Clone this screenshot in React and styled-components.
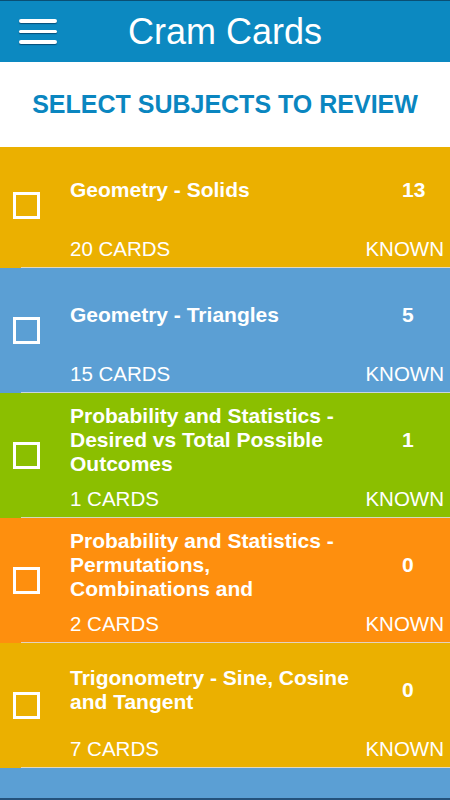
import React from 'react';
import styled, { createGlobalStyle } from 'styled-components';

const GlobalStyle = createGlobalStyle`
  html, body {
    margin: 0;
    padding: 0;
    background: #ffffff;
  }
  body {
    font-family: 'Liberation Sans', Arial, Helvetica, sans-serif;
    -webkit-font-smoothing: antialiased;
  }
`;

const Screen = styled.div`
  width: 450px;
  height: 800px;
  display: flex;
  flex-direction: column;
  overflow: hidden;
  border-bottom: 2px solid #24527c;
  box-sizing: border-box;
`;

const Header = styled.header`
  height: 62px;
  flex-shrink: 0;
  box-sizing: border-box;
  border-top: 1px solid #0a4f74;
  background: #0c89c1;
  display: grid;
  grid-template-columns: 1fr auto 1fr;
  align-items: center;
`;

const MenuButton = styled.div`
  display: flex;
  flex-direction: column;
  gap: 7px;
  padding-left: 19px;
`;

const MenuBar = styled.span`
  display: block;
  width: 38px;
  height: 3.5px;
  border-radius: 2px;
  background: #ffffff;
  box-shadow: 0 1px 1px rgba(0, 30, 60, 0.55);
`;

const Title = styled.h1`
  margin: 0;
  color: #ffffff;
  font-size: 36px;
  font-weight: 400;
  line-height: 1;
  white-space: nowrap;
`;

const SelectSection = styled.div`
  position: relative;
  z-index: 1;
  height: 85px;
  flex-shrink: 0;
  background: #ffffff;
  display: flex;
  align-items: center;
  justify-content: center;
`;

const SelectTitle = styled.h2`
  margin: 0;
  color: #0a86c0;
  font-size: 25px;
  font-weight: 700;
  white-space: nowrap;
`;

const SubjectList = styled.ul`
  list-style: none;
  margin: -4px 0 0;
  padding: 0;
  flex: 1;
  background: #5b9fd4;
`;

const Row = styled.li`
  position: relative;
  display: flex;
  height: 125px;
  box-sizing: border-box;
  padding-bottom: 1px;
  background: ${props => props.$color};
  color: #ffffff;

  &::after {
    content: '';
    position: absolute;
    left: 21px;
    right: 0;
    bottom: 0;
    height: 1px;
    background: rgba(222, 222, 222, 0.85);
  }
`;

const CheckCol = styled.div`
  width: 70px;
  flex-shrink: 0;
  box-sizing: border-box;
  padding-left: 13px;
  display: flex;
  align-items: center;
`;

const Checkbox = styled.span`
  display: block;
  width: 27px;
  height: 27px;
  box-sizing: border-box;
  border: 3px solid #ffffff;
`;

const Body = styled.div`
  flex: 1;
  display: flex;
  flex-direction: column;
  padding-bottom: 6px;
`;

const TopLine = styled.div`
  height: 94px;
  display: flex;
  align-items: center;
`;

const SubjectName = styled.div`
  width: 282px;
  flex-shrink: 0;
  font-size: 21px;
  font-weight: 700;
  line-height: 24px;
`;

const Count = styled.div`
  margin-left: 50px;
  font-size: 21px;
  font-weight: 700;
  line-height: 24px;
`;

const BottomLine = styled.div`
  height: 24px;
  display: flex;
  justify-content: space-between;
  align-items: center;
  padding-right: 6px;
  font-size: 20.5px;
  line-height: 24px;
`;

const subjects = [
  { name: 'Geometry - Solids', known: 13, cards: 20, color: '#ebb000' },
  { name: 'Geometry - Triangles', known: 5, cards: 15, color: '#5b9fd4' },
  { name: 'Probability and Statistics - Desired vs Total Possible Outcomes', known: 1, cards: 1, color: '#8bbf00' },
  { name: 'Probability and Statistics - Permutations, Combinations and', known: 0, cards: 2, color: '#fe8f0e' },
  { name: 'Trigonometry - Sine, Cosine and Tangent', known: 0, cards: 7, color: '#ebb000' },
];

function App() {
  return (
    <>
      <GlobalStyle />
      <Screen>
        <Header>
          <MenuButton>
            <MenuBar />
            <MenuBar />
            <MenuBar />
          </MenuButton>
          <Title>Cram Cards</Title>
          <div />
        </Header>
        <SelectSection>
          <SelectTitle>SELECT SUBJECTS TO REVIEW</SelectTitle>
        </SelectSection>
        <SubjectList>
          {subjects.map(s => (
            <Row key={s.name} $color={s.color}>
              <CheckCol>
                <Checkbox />
              </CheckCol>
              <Body>
                <TopLine>
                  <SubjectName>{s.name}</SubjectName>
                  <Count>{s.known}</Count>
                </TopLine>
                <BottomLine>
                  <span>{s.cards} CARDS</span>
                  <span>KNOWN</span>
                </BottomLine>
              </Body>
            </Row>
          ))}
        </SubjectList>
      </Screen>
    </>
  );
}

export default App;
